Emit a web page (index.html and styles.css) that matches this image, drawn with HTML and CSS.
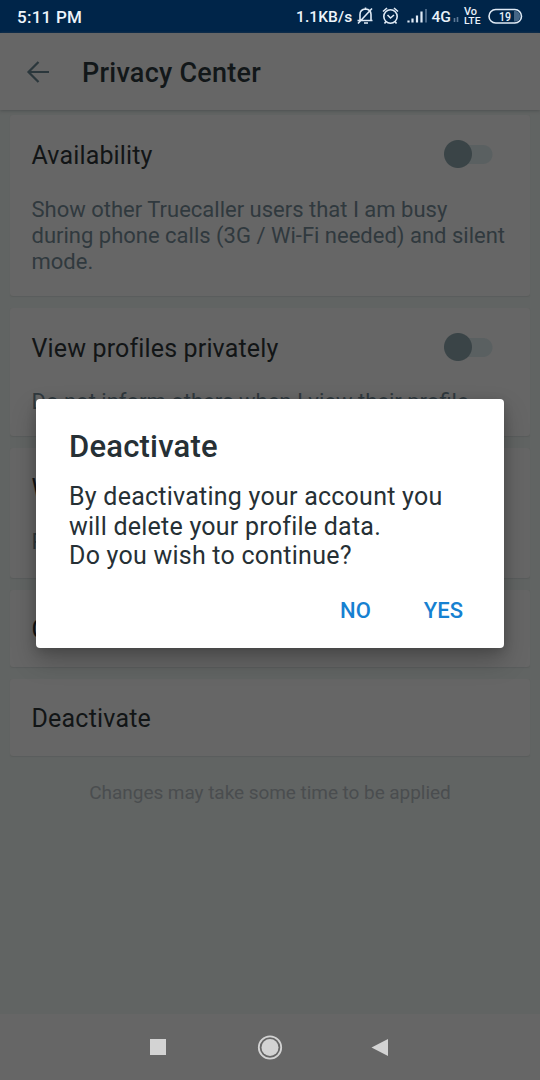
FILE: index.html
```html
<!DOCTYPE html>
<html lang="en">
<head>
<meta charset="utf-8">
<title>Privacy Center</title>
<link rel="stylesheet" href="styles.css">
</head>
<body>
<div class="screen">
  <div class="status">
    <span class="time">5:11 PM</span>
    <span class="speed">1.1KB/s</span>
    <svg class="status-icons" width="184" height="33" viewBox="0 0 184 33" fill="none" stroke="#dfeaf5" stroke-width="1.6">
      <path d="M3.500 20.500h15M6 20V14.500q0-5 5.500-5.500 5.500.5 5.500 5.500V20M10 23h4M4 23.500L18 8.500M11.500 9V7.500"/>
      <circle cx="36.500" cy="16.500" r="6.700"/><path d="M33.500 15l3 3 3.500-3M29 11.500l4-3.500M44 11.500l-4-3.500M32 21.500l-1.500 2M41 21.500l1.500 2"/>
      <path d="M54.500 22.500v-2M58.500 22.500v-4M63 22.500v-7M67.500 22.500v-11" stroke-width="2.200"/>
      <path d="M72 22.500V9" stroke="#5b7896"/>
      <path d="M100.500 22v-4M103.500 22v-5" stroke="#5b7896"/>
      <g class="status-label" stroke="none" fill="#e8f1f9">
        <text x="77.500" y="22" font-size="15.500" textLength="19.500" lengthAdjust="spacingAndGlyphs">4G</text>
        <text x="110" y="15" font-size="10" textLength="13" lengthAdjust="spacingAndGlyphs">Vo</text>
        <text x="110" y="24" font-size="9.500" textLength="16.500" lengthAdjust="spacingAndGlyphs">LTE</text>
        <text x="145" y="20.500" font-size="12" textLength="12" lengthAdjust="spacingAndGlyphs">19</text>
      </g>
      <rect x="135" y="9.500" width="32.500" height="13.500" rx="6.700"/>
      <path d="M160 11h2q4 1 4 5.200t-4 5.300h-2z" fill="#456586" stroke="none"/>
    </svg>
  </div>
  <header class="appbar">
    <svg class="back" width="24" height="24" viewBox="0 0 24 24" fill="none" stroke="#2b373c" stroke-width="2.200"><path d="M23 12H2.500M12.500 2L2.500 12l10 10"/></svg>
    <h1 class="title">Privacy Center</h1>
  </header>
  <main class="content">
    <section class="card availability">
      <div class="row"><h2 class="label">Availability</h2><span class="switch"></span></div>
      <p class="desc">Show other Truecaller users that I am busy<br>during phone calls (3G / Wi-Fi needed) and silent<br>mode.</p>
    </section>
    <section class="card private">
      <div class="row"><h2 class="label">View profiles privately</h2><span class="switch"></span></div>
      <p class="desc">Do not inform others when I view their profile</p>
    </section>
    <section class="card viewed">
      <div class="row"><h2 class="label">W</h2></div>
      <p class="desc">R</p>
    </section>
    <section class="card simple"><h2 class="label">C</h2></section>
    <section class="card simple last"><h2 class="label">Deactivate</h2></section>
    <p class="note">Changes may take some time to be applied</p>
  </main>
  <nav class="navbar">
    <svg width="540" height="66" viewBox="0 0 540 66" fill="#d3d3d3">
      <rect x="150" y="25" width="16" height="16"/>
      <circle cx="270" cy="33.500" r="8.500"/>
      <circle cx="270" cy="33.500" r="11.200" fill="none" stroke="#d3d3d3" stroke-width="1.800"/>
      <path d="M371.500 33.500L388 25v17z"/>
    </svg>
  </nav>
  <div class="dialog" role="dialog">
    <h2 class="dialog-title">Deactivate</h2>
    <p class="dialog-text">By deactivating your account you<br>will delete your profile data.<br>Do you wish to continue?</p>
    <div class="actions"><span class="action">NO</span><span class="action">YES</span></div>
  </div>
</div>
</body>
</html>
```
FILE: styles.css
```css
* { box-sizing: border-box; }
body, h1, h2, p { margin: 0; font-weight: 400; }
body { font-family: Roboto, sans-serif; }
.screen { position: relative; width: 540px; height: 1080px; overflow: hidden; display: flex; flex-direction: column; background: #616463; }
.status { flex: none; height: 33px; display: flex; align-items: center; background: #002549; color: #eef5fb; font-weight: 500; }
.time { width: 280px; padding-left: 17px; font-size: 17px; letter-spacing: .25px; }
.speed { width: 74px; padding-left: 16px; font-size: 15.5px; letter-spacing: .1px; white-space: nowrap; }
.status-icons { flex: none; }
.status-label { font-weight: 500; }
.appbar { flex: none; height: 77px; display: flex; align-items: center; padding: 0 0 0 26px; background: #666; box-shadow: 0 1px 3px #4e5151; position: relative; }
.back { margin-right: 32px; }
.title { font-size: 27px; line-height: 32px; font-weight: 500; letter-spacing: .25px; color: #121719; padding-top: 3px; }
.content { flex: 1; padding: 5px 10px 0; }
.card { background: #666; border-radius: 3px; box-shadow: 0 1px 1px #5a5d5c; padding: 0 22px 0 21.5px; margin-bottom: 12px; }
.row { display: flex; justify-content: space-between; height: 79px; align-items: center; }
.label { font-size: 25px; line-height: 30px; letter-spacing: .2px; color: #121516; }
.row .label { padding-top: 2px; letter-spacing: .15px; }
.switch { width: 49px; height: 28px; margin: 0 15px 1px 0; background: radial-gradient(circle at 14px 14px, #3a4447 13.5px, transparent 14.5px), linear-gradient(#5a6061, #5a6061) 14px 5px / 26px 19px no-repeat, radial-gradient(circle at 39px 14.5px, #5a6061 9px, transparent 10px); }
.desc { font-size: 22px; line-height: 26px; color: #30393e; white-space: nowrap; }
.availability { height: 181px; }
.availability .desc { padding-top: 3px; }
.private { height: 128px; }
.private .desc, .viewed .desc { padding-top: 2px; }
.viewed { height: 130px; }
.simple { height: 77px; display: flex; align-items: center; }
.simple .label { padding-top: 2px; }
.last { margin-bottom: 24px; }
.note { font-size: 19px; line-height: 26px; text-align: center; color: #4a4d4f; letter-spacing: -.05px; }
.navbar { flex: none; height: 66px; background: #666; }
.dialog { position: absolute; left: 36px; top: 399px; width: 468px; height: 249px; border-radius: 4px; background: #fff; padding: 29px 33px 0; box-shadow: 0 12px 24px rgba(0,0,0,.25), 0 2px 10px rgba(0,0,0,.15); }
.dialog-title { font-size: 31px; line-height: 38px; font-weight: 500; letter-spacing: .2px; color: #263035; }
.dialog-text { margin-top: 16px; font-size: 25px; line-height: 29.5px; letter-spacing: .24px; color: #263035; white-space: nowrap; }
.actions { display: flex; justify-content: flex-end; gap: 53px; margin: 26px 8px 0 0; font-size: 22px; line-height: 28px; font-weight: 500; color: #1681d1; }
```
